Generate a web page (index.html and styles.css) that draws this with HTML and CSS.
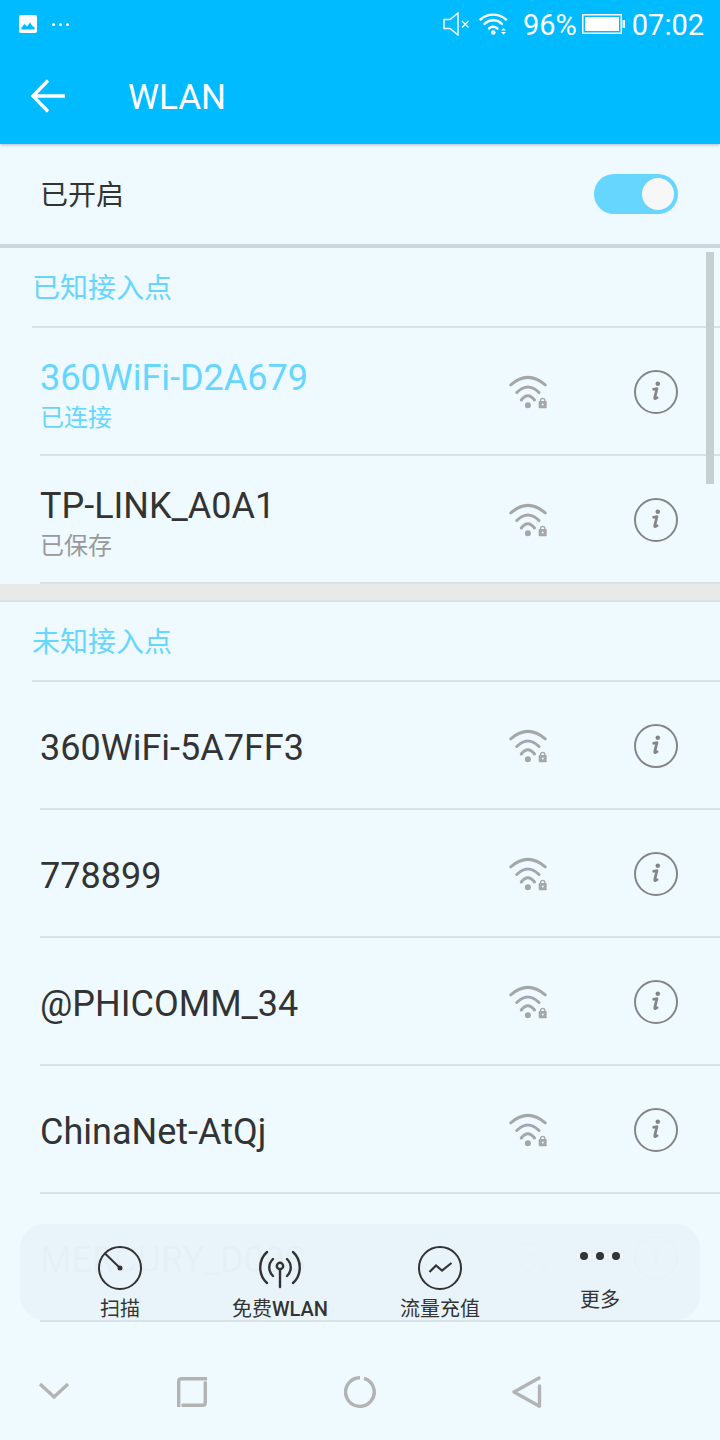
FILE: index.html
```html
<!DOCTYPE html>
<html lang="zh">
<head>
<meta charset="utf-8">
<title>WLAN</title>
<link rel="stylesheet" href="styles.css">
</head>
<body>
<svg class="defs" width="0" height="0">
  <symbol id="wifi" viewBox="0 0 40 34">
    <path d="M2.800 9.800Q19.900 -5 37.200 9.800" fill="none" stroke-width="3" stroke="#a6a6a6" stroke-linecap="round"/>
    <path d="M8.800 17.500Q19.900 6.500 31 17.500" fill="none" stroke-width="3" stroke="#a6a6a6" stroke-linecap="round"/>
    <path d="M13.300 25Q19.900 16.500 26.500 25" fill="none" stroke-width="3" stroke="#a6a6a6" stroke-linecap="round"/>
    <circle cx="19.900" cy="30.300" r="3" fill="#a6a6a6"/>
    <rect x="30.700" y="26" width="8" height="7.300" rx="1" fill="#a6a6a6"/>
    <path d="M32.500 26.500v-1a2.200 2.200 0 0 1 4.400 0v1" fill="none" stroke="#a6a6a6" stroke-width="1.300"/>
    <circle cx="34.700" cy="29.600" r="1" fill="#eefaff"/>
  </symbol>
  <symbol id="info" viewBox="0 0 44 44">
    <circle cx="22" cy="22" r="21" fill="none" stroke="#858585" stroke-width="2"/>
    <circle cx="23.800" cy="13.800" r="2.300" fill="#858585"/>
    <path d="M18.500 19.500l4.500-.8-2.300 9c-.3 1.200.8 1.300 3.300-.7" fill="none" stroke="#858585" stroke-width="2.700" stroke-linejoin="round"/>
  </symbol>
</svg>

<div class="page">
  <header class="appbar">
    <div class="status">
      <div class="status-left">
        <svg class="st-img" width="18" height="18" viewBox="0 0 18 18"><rect width="18" height="18" rx="2" fill="#fff"/><path d="M2.500 14.500v-2l3-3.500 2.500 2.500 3-4 2 3 2.500 2v2z" fill="#00bbff"/></svg>
        <span class="dots"><i></i><i></i><i></i></span>
      </div>
      <div class="status-right">
        <svg width="27" height="24" viewBox="0 0 27 24" fill="none" stroke="#fff"><path d="M1 7.500h6L15 1v22L7 16.500H1z" stroke-width="1.400"/><path d="M19 9l6.500 6.500M25.500 9L19 15.500" stroke-width="1.300"/></svg>
        <svg class="st-wifi" width="30" height="22" viewBox="0 0 30 22" fill="none" stroke="#fff" stroke-width="2.400" stroke-linecap="round"><path d="M1.500 6.500C8.500 0 19.500 0 27 6.500"/><path d="M5.500 11C10.500 6 18 6 23 11"/><path d="M10 15.500c2.500-2.200 5.500-2.200 8.500 0"/><circle cx="14.300" cy="19.500" r="2.300" fill="#fff" stroke="none"/><path d="M22 17.500l2.500-2.500 2.500 2.500zM22 19l2.500 2.500L27 19z" fill="#fff" stroke="none"/></svg>
        <span class="st-text pct">96%</span>
        <svg class="st-bat" width="43" height="20" viewBox="0 0 43 20"><rect x=".75" y=".75" width="38.500" height="18.500" fill="none" stroke="#fff" stroke-width="1.500"/><rect x="3" y="3" width="34" height="14" fill="#fff"/><rect x="40.500" y="6" width="2.500" height="8" fill="#fff"/></svg>
        <span class="st-text">07:02</span>
      </div>
    </div>
    <div class="toolbar">
      <svg class="back" width="36" height="36" viewBox="0 0 36 36" fill="none" stroke="#fff" stroke-width="3.400"><path d="M35 18H3M18 2.500L3 18l15 15.500"/></svg>
      <h1 class="title">WLAN</h1>
    </div>
  </header>

  <div class="switch-row">
    <span class="switch-label">已开启</span>
    <span class="switch"><span class="knob"></span></span>
  </div>

  <section class="group">
    <h2 class="group-title">已知接入点</h2>
    <div class="row row-connected">
      <div class="row-text"><div class="name">360WiFi-D2A679</div><div class="sub">已连接</div></div>
      <svg class="ic-wifi"><use href="#wifi"/></svg><svg class="ic-info"><use href="#info"/></svg>
    </div>
    <div class="row">
      <div class="row-text"><div class="name">TP-LINK_A0A1</div><div class="sub">已保存</div></div>
      <svg class="ic-wifi"><use href="#wifi"/></svg><svg class="ic-info"><use href="#info"/></svg>
    </div>
  </section>

  <div class="divider"></div>

  <section class="group">
    <h2 class="group-title">未知接入点</h2>
    <div class="row">
      <div class="row-text"><div class="name">360WiFi-5A7FF3</div></div>
      <svg class="ic-wifi"><use href="#wifi"/></svg><svg class="ic-info"><use href="#info"/></svg>
    </div>
    <div class="row">
      <div class="row-text"><div class="name">778899</div></div>
      <svg class="ic-wifi"><use href="#wifi"/></svg><svg class="ic-info"><use href="#info"/></svg>
    </div>
    <div class="row">
      <div class="row-text"><div class="name">@PHICOMM_34</div></div>
      <svg class="ic-wifi"><use href="#wifi"/></svg><svg class="ic-info"><use href="#info"/></svg>
    </div>
    <div class="row">
      <div class="row-text"><div class="name">ChinaNet-AtQj</div></div>
      <svg class="ic-wifi"><use href="#wifi"/></svg><svg class="ic-info"><use href="#info"/></svg>
    </div>
    <div class="row">
      <div class="row-text"><div class="name">MERCURY_D00S</div></div>
      <svg class="ic-wifi"><use href="#wifi"/></svg><svg class="ic-info"><use href="#info"/></svg>
    </div>
  </section>

  <div class="scrollbar"></div>

  <nav class="actions">
    <div class="action">
      <svg width="44" height="44" viewBox="0 0 44 44" fill="none" stroke="#333" stroke-width="2"><circle cx="22" cy="22" r="21"/><path d="M6.500 7L22 22"/><circle cx="22" cy="22" r="2.500" fill="#333" stroke="none"/></svg>
      <span class="action-label">扫描</span>
    </div>
    <div class="action">
      <svg width="44" height="44" viewBox="0 0 44 44" fill="none" stroke="#333" stroke-width="2.400" stroke-linecap="round"><path d="M9 6C0 14 0 29 9 37"/><path d="M35 6C44 14 44 29 35 37"/><path d="M15 13C10 18 10 25 15 30"/><path d="M29 13C34 18 34 25 29 30"/><circle cx="22" cy="20" r="3.200"/><path d="M22 23.500V41"/></svg>
      <span class="action-label">免费<b class="latin">WLAN</b></span>
    </div>
    <div class="action">
      <svg width="44" height="44" viewBox="0 0 44 44" fill="none" stroke="#333" stroke-width="2"><circle cx="22" cy="22" r="21"/><path d="M11.500 26L18 19.500l6 5 9.500-7.500" stroke-width="2.200"/></svg>
      <span class="action-label">流量充值</span>
    </div>
    <div class="action action-more">
      <svg width="44" height="12" viewBox="0 0 44 12" fill="#333"><circle cx="6" cy="6" r="4"/><circle cx="22" cy="6" r="4"/><circle cx="38" cy="6" r="4"/></svg>
      <span class="action-label">更多</span>
    </div>
  </nav>

  <footer class="navbar">
    <svg class="nav-down" width="32" height="20" viewBox="0 0 32 20" fill="none" stroke="#b3b3b3" stroke-width="3.400"><path d="M2 3l14 13L30 3"/></svg>
    <svg class="nav-square" width="30" height="30" viewBox="0 0 30 30" fill="none" stroke="#b3b3b3" stroke-width="3.400"><path d="M1.700 30V4.500Q1.700 1.700 4.500 1.700H30"/><path d="M28.300 4.500V25.500Q28.300 28.300 25.500 28.300H4.500"/></svg>
    <svg class="nav-circle" width="32" height="32" viewBox="0 0 32 32" fill="none" stroke="#b3b3b3" stroke-width="3.400"><path d="M20 2.300A14.300 14.300 0 1 1 16 1.700"/></svg>
    <svg class="nav-back" width="30" height="32" viewBox="0 0 30 32" fill="none" stroke="#b3b3b3" stroke-width="3.400" stroke-linejoin="round" stroke-linecap="round"><path d="M27 2L2 16l25 14"/><path d="M27.500 10v20"/></svg>
  </footer>
</div>
</body>
</html>
```
FILE: styles.css
```css
* { box-sizing: border-box; }
html, body { margin: 0; padding: 0; }
body { background: #eefaff; font-family: Roboto, "Noto Sans CJK SC", sans-serif; }
.defs { position: absolute; }
.page { position: relative; width: 720px; height: 1440px; overflow: hidden; background: #eefaff; color: #333; }

.appbar { position: relative; height: 144px; background: #00bbff; box-shadow: 0 1px 3px rgba(0,0,0,.25); color: #fff; }
.status { height: 48px; display: flex; justify-content: space-between; align-items: center; padding: 0 16px 0 19px; }
.status-left, .status-right { display: flex; align-items: center; }
.st-img { margin-right: 15px; }
.dots { display: flex; gap: 4px; }
.dots i { width: 3px; height: 3px; background: #fff; border-radius: 50%; }
.st-text { font-size: 29px; line-height: 48px; margin-top: 2px; }
.pct { margin-left: 14px; margin-right: 5px; }
.st-wifi { margin-left: 9px; }
.st-bat { margin-right: 7px; }

.toolbar { height: 96px; display: flex; align-items: center; padding-left: 30px; }
.back { flex: none; }
.title { margin: 4px 0 0 62px; font-size: 35px; font-weight: 400; line-height: 90px; }

.switch-row { height: 104px; border-bottom: 4px solid #cdd6d8; padding: 0 42px 0 40px; display: flex; align-items: center; justify-content: space-between; }
.switch-label { font-size: 28px; line-height: 40px; margin-top: 4px; color: #333; }
.switch { width: 84px; height: 40px; border-radius: 20px; background: #66d6ff; display: flex; align-items: center; justify-content: flex-end; padding-right: 4px; }
.knob { width: 32px; height: 32px; border-radius: 50%; background: #f7f7f7; }

.group-title { margin: 0 0 0 32px; height: 80px; border-bottom: 2px solid #d8e2e4; font-size: 28px; font-weight: 400; line-height: 81px; color: #66d6ff; }
.row { height: 128px; margin-left: 40px; border-bottom: 2px solid #d8e2e4; display: flex; align-items: center; padding: 2px 42px 0 0; }
.row-text { flex: 1; min-width: 0; padding-top: 4px; }
.name { font-size: 36px; line-height: 40px; color: #333; white-space: nowrap; }
.sub { font-size: 24px; line-height: 40px; margin-bottom: -8px; color: #999; }
.row-connected .name, .row-connected .sub { color: #66d6ff; }
.ic-wifi { width: 40px; height: 34px; margin-right: 86px; flex: none; }
.ic-info { width: 44px; height: 44px; flex: none; }

.divider { height: 18px; background: #e9e9e9; border-bottom: 2px solid #d8e2e4; }

.scrollbar { position: absolute; left: 706px; top: 252px; width: 8px; height: 232px; background: #c5d0d2; }

.actions { position: absolute; left: 20px; top: 1224px; width: 680px; height: 96px; border-radius: 24px; background: rgba(232,244,249,.985); display: grid; grid-template-columns: repeat(4, 160px); padding: 0 20px; }
.action { display: flex; flex-direction: column; align-items: center; padding-top: 22px; }
.action-label { font-size: 20px; line-height: 26px; color: #333; margin-top: 6px; white-space: nowrap; }
.latin { font-weight: 500; }
.action-more { padding-top: 26px; }
.action-more .action-label { margin-top: 25px; }

.navbar { position: absolute; left: 0; bottom: 0; width: 720px; height: 96px; }
.navbar svg { position: absolute; }
.nav-down { left: 38px; top: 37px; }
.nav-square { left: 177px; top: 33px; }
.nav-circle { left: 344px; top: 32px; }
.nav-back { left: 512px; top: 32px; }
```
